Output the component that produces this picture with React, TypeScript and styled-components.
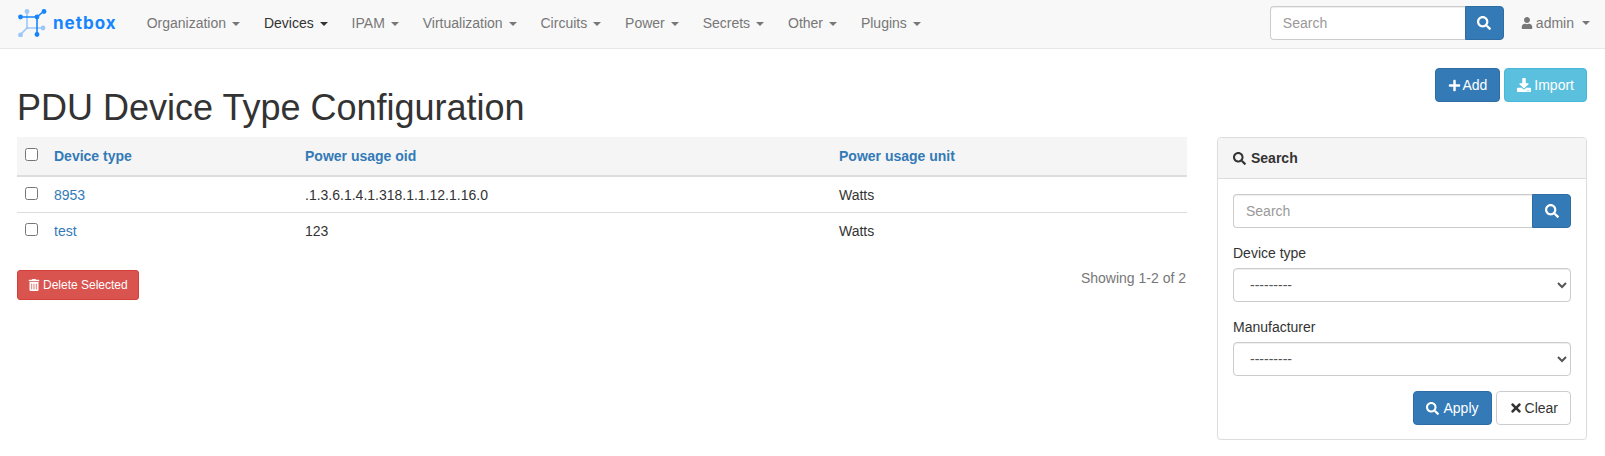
import React from 'react';
import styled, { createGlobalStyle } from 'styled-components';
import { FaSearch, FaPlus, FaDownload, FaUser, FaTrashAlt, FaTimes } from 'react-icons/fa';

const Global = createGlobalStyle`
  * { box-sizing: border-box; }
  html, body { margin: 0; padding: 0; background: #fff; }
  body { font-family: "Liberation Sans", Arial, sans-serif; font-size: 14px; line-height: 20px; color: #333; }
`;

const Navbar = styled.nav`
  display: flex;
  align-items: center;
  height: 49px;
  padding: 0 15px 2px 18px;
  background: #f8f8f8;
  border-bottom: 1px solid #e7e7e7;
`;
const Brand = styled.a`
  display: flex;
  align-items: center;
  gap: 6px;
  margin-right: 18px;
  color: #1685fc;
  font-family: "Inter", "Noto Sans", sans-serif;
  font-weight: 700;
  font-size: 17px;
  letter-spacing: 1px;
`;
const NavList = styled.ul`
  display: flex;
  flex: 1;
  list-style: none;
  margin: 0;
  padding: 0;
`;
const NavItem = styled.li<{ $active?: boolean }>`
  padding: 0 12px;
  color: ${p => (p.$active ? '#333' : '#777')};
  white-space: nowrap;
`;
const Caret = styled.span`
  display: inline-block;
  width: 0;
  height: 0;
  margin-left: 2px;
  vertical-align: middle;
  border-top: 4px solid;
  border-right: 4px solid transparent;
  border-left: 4px solid transparent;
`;
const InputGroup = styled.div<{ $width?: number }>`
  display: flex;
  height: 34px;
  width: ${p => (p.$width ? `${p.$width}px` : '100%')};
`;
const TextInput = styled.input`
  flex: 1;
  min-width: 0;
  height: 34px;
  padding: 6px 12px;
  font: inherit;
  color: #555;
  background: #fff;
  border: 1px solid #ccc;
  border-right: 0;
  border-radius: 4px 0 0 4px;
  box-shadow: inset 0 1px 1px rgba(0, 0, 0, 0.075);
  &::placeholder { color: #999; opacity: 1; }
`;
const IconButton = styled.button`
  display: flex;
  align-items: center;
  justify-content: center;
  width: 39px;
  padding: 0;
  color: #fff;
  font-size: 14px;
  background: #337ab7;
  border: 1px solid #2e6da4;
  border-radius: 0 4px 4px 0;
`;
const UserMenu = styled.div`
  display: flex;
  align-items: center;
  gap: 3px;
  margin-left: 17px;
  color: #777;
  white-space: nowrap;
`;
const UserCaret = styled(Caret)`
  margin-left: 5px;
`;
const Page = styled.main`
  padding: 0 18px 0 17px;
`;
const Header = styled.header`
  display: flex;
  justify-content: space-between;
  align-items: flex-start;
  height: 88px;
  padding-top: 19px;
`;
const Title = styled.h1`
  align-self: flex-end;
  margin: 0 0 9px;
  font-size: 36px;
  font-weight: 500;
  line-height: 40px;
  color: #333;
`;
const Actions = styled.div`
  display: flex;
  gap: 4px;
`;
const Button = styled.button<{ $kind: 'primary' | 'info' | 'default' | 'danger'; $small?: boolean; $gap?: number }>`
  display: inline-flex;
  align-items: center;
  gap: ${p => p.$gap ?? 3}px;
  height: ${p => (p.$small ? '30px' : '34px')};
  padding: ${p => (p.$small ? '0 10px' : '0 12px')};
  font: inherit;
  font-size: ${p => (p.$small ? '12px' : '14px')};
  border-radius: ${p => (p.$small ? '3px' : '4px')};
  white-space: nowrap;
  color: ${p => (p.$kind === 'default' ? '#333' : '#fff')};
  background: ${p => ({ primary: '#337ab7', info: '#5bc0de', default: '#fff', danger: '#d9534f' }[p.$kind])};
  border: 1px solid ${p => ({ primary: '#2e6da4', info: '#46b8da', default: '#ccc', danger: '#d43f3a' }[p.$kind])};
`;
const DeleteButton = styled(Button)`
  margin-top: 2px;
`;
const Columns = styled.div`
  display: grid;
  grid-template-columns: 1170px 370px;
  gap: 30px;
`;
const Table = styled.table`
  width: 100%;
  table-layout: fixed;
  border-collapse: collapse;
`;
const HeadRow = styled.tr`
  background: #f5f5f5;
  border-bottom: 2px solid #ddd;
`;
const Th = styled.th`
  height: 39px;
  padding: 8px;
  text-align: left;
  font-weight: 700;
  color: #337ab7;
  vertical-align: middle;
`;
const Td = styled.td`
  height: 35px;
  padding: 8px 8px 7px;
  vertical-align: middle;
`;
const BodyRow = styled.tr`
  & + & { border-top: 1px solid #ddd; }
`;
const CheckCell = styled.span`
  display: block;
  height: 13px;
  margin: -3px 0 0;
  input { display: block; width: 13px; height: 13px; margin: 0; }
`;
const RowLink = styled.a`
  color: #337ab7;
`;
const TableFooter = styled.div`
  display: flex;
  justify-content: space-between;
  align-items: flex-start;
  margin-top: 20px;
`;
const Showing = styled.div`
  color: #777;
  padding-right: 1px;
`;
const Panel = styled.aside`
  height: 303px;
  border: 1px solid #ddd;
  border-radius: 4px;
  box-shadow: 0 1px 1px rgba(0, 0, 0, 0.05);
`;
const PanelHeading = styled.div`
  display: flex;
  align-items: center;
  gap: 5px;
  height: 41px;
  padding: 0 15px;
  font-weight: 700;
  color: #333;
  font-size: 14px;
  background: #f5f5f5;
  border-bottom: 1px solid #ddd;
  border-radius: 3px 3px 0 0;
  svg { font-size: 13px; }
`;
const PanelBody = styled.form`
  padding: 15px;
`;
const Field = styled.div`
  margin-top: 15px;
`;
const Label = styled.label`
  display: block;
  margin-bottom: 5px;
  color: #333;
`;
const Select = styled.select`
  display: block;
  width: 100%;
  height: 34px;
  padding: 6px 12px;
  font: inherit;
  color: #555;
  background: #fff;
  border: 1px solid #ccc;
  border-radius: 4px;
  box-shadow: inset 0 1px 1px rgba(0, 0, 0, 0.075);
`;
const FormActions = styled.div`
  display: flex;
  justify-content: flex-end;
  gap: 4px;
  margin-top: 15px;
`;

const Logo = () => (
  <svg width="29" height="28" viewBox="0 0 29 28" fill="none">
    <g stroke="#9cc8f9" strokeWidth="1.6">
      <path d="M9 2V19H25M9 19L2 26" />
    </g>
    <g fill="#9cc8f9">
      <circle cx="9" cy="2.5" r="2.4" />
      <circle cx="25" cy="19" r="2.4" />
      <circle cx="9" cy="19" r="1.2" />
      <circle cx="2.5" cy="26" r="2.4" />
    </g>
    <g stroke="#1685fc" strokeWidth="1.6">
      <path d="M2 8H19V25M19 8L26 2" />
    </g>
    <g fill="#1685fc">
      <circle cx="2.5" cy="8" r="2.4" />
      <circle cx="26" cy="2.5" r="2.4" />
      <circle cx="19" cy="8" r="2.4" />
      <circle cx="19" cy="25.5" r="2.4" />
    </g>
  </svg>
);

const NAV = ['Organization', 'Devices', 'IPAM', 'Virtualization', 'Circuits', 'Power', 'Secrets', 'Other', 'Plugins'];
const ROWS = [
  { type: '8953', oid: '.1.3.6.1.4.1.318.1.1.12.1.16.0', unit: 'Watts' },
  { type: 'test', oid: '123', unit: 'Watts' },
];

export default function App() {
  return (
    <>
      <Global />
      <Navbar>
        <Brand>
          <Logo />
          netbox
        </Brand>
        <NavList>
          {NAV.map(n => (
            <NavItem key={n} $active={n === 'Devices'}>
              {n} <Caret />
            </NavItem>
          ))}
        </NavList>
        <InputGroup $width={234}>
          <TextInput placeholder="Search" />
          <IconButton><FaSearch /></IconButton>
        </InputGroup>
        <UserMenu>
          <FaUser size={12} />
          admin
          <UserCaret />
        </UserMenu>
      </Navbar>
      <Page>
        <Header>
          <Title>PDU Device Type Configuration</Title>
          <Actions>
            <Button $kind="primary" $gap={1}><FaPlus size={13} />Add</Button>
            <Button $kind="info"><FaDownload size={14} />Import</Button>
          </Actions>
        </Header>
        <Columns>
          <section>
            <Table>
              <colgroup>
                <col width="29" />
                <col width="251" />
                <col width="534" />
                <col />
              </colgroup>
              <thead>
                <HeadRow>
                  <Th><CheckCell><input type="checkbox" /></CheckCell></Th>
                  <Th>Device type</Th>
                  <Th>Power usage oid</Th>
                  <Th>Power usage unit</Th>
                </HeadRow>
              </thead>
              <tbody>
                {ROWS.map(r => (
                  <BodyRow key={r.type}>
                    <Td><CheckCell><input type="checkbox" /></CheckCell></Td>
                    <Td><RowLink>{r.type}</RowLink></Td>
                    <Td>{r.oid}</Td>
                    <Td>{r.unit}</Td>
                  </BodyRow>
                ))}
              </tbody>
            </Table>
            <TableFooter>
              <DeleteButton $kind="danger" $small><FaTrashAlt size={12} />Delete Selected</DeleteButton>
              <Showing>Showing 1-2 of 2</Showing>
            </TableFooter>
          </section>
          <Panel>
            <PanelHeading><FaSearch />Search</PanelHeading>
            <PanelBody>
              <InputGroup>
                <TextInput placeholder="Search" />
                <IconButton><FaSearch /></IconButton>
              </InputGroup>
              <Field>
                <Label>Device type</Label>
                <Select><option>---------</option></Select>
              </Field>
              <Field>
                <Label>Manufacturer</Label>
                <Select><option>---------</option></Select>
              </Field>
              <FormActions>
                <Button $kind="primary" $gap={5}><FaSearch size={13} />Apply</Button>
                <Button $kind="default" $gap={2}><FaTimes size={14} />Clear</Button>
              </FormActions>
            </PanelBody>
          </Panel>
        </Columns>
      </Page>
    </>
  );
}
